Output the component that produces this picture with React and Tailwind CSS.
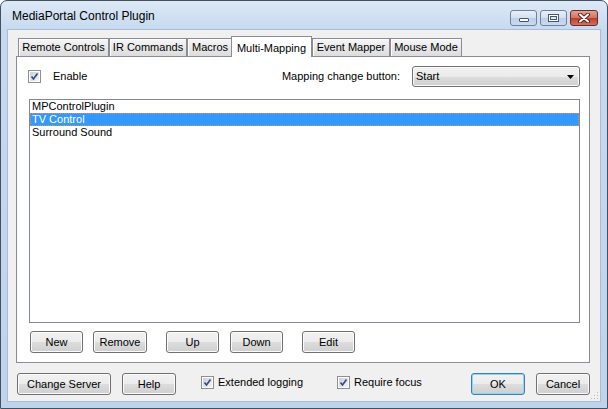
import React from "react";

const font = "font-['Liberation_Sans',Arial,sans-serif]";

function Btn({ children, className = "", def }) {
  return (
    <div
      className={`h-[22px] flex items-center justify-center rounded-[3px] border text-[11px] text-black ${
        def
          ? "border-[#3c7fb1] shadow-[inset_0_0_0_1px_#8ed6f8]"
          : "border-[#707070] shadow-[inset_0_0_0_1px_#fbfbfb]"
      } bg-[linear-gradient(to_bottom,#f2f2f2_0%,#ebebeb_50%,#dddddd_50%,#cfcfcf_100%)] ${className}`}
    >
      {children}
    </div>
  );
}

function Check() {
  return (
    <div className="w-[13px] h-[13px] border border-[#8e8f8f] bg-white p-[1px] shrink-0">
      <div className="w-full h-full bg-[linear-gradient(135deg,#cbcfd5,#f4f4f4)] flex items-center justify-center">
        <svg width="9" height="9" viewBox="0 0 9 9">
          <path d="M1.5 4.5 L3.5 7 L7.5 1.5" fill="none" stroke="#2b4a8a" strokeWidth="1.6" />
        </svg>
      </div>
    </div>
  );
}

function Tab({ label, w, selected }) {
  if (selected) {
    return (
      <div
        className={`relative z-10 -ml-[2px] h-[21px] -mb-px border border-b-0 border-[#898c95] bg-white flex items-start justify-center pt-[3px] ${w}`}
      >
        {label}
      </div>
    );
  }
  return (
    <div
      className={`h-[18px] border border-b-0 border-[#898c95] bg-[linear-gradient(to_bottom,#f6f6f6,#e9e9e9_50%,#dcdcdc)] shadow-[inset_1px_1px_0_#fcfcfc] flex items-center justify-center ${w}`}
    >
      {label}
    </div>
  );
}

export default function App() {
  return (
    <div className={`w-[608px] h-[409px] bg-white ${font} text-[11px] text-black`}>
      <div className="w-[608px] h-[409px] rounded-t-[7px] border border-[#45505f] bg-[linear-gradient(to_bottom,#dce8f5,#c6d9ef_30px,#bfd3ec)] flex flex-col px-[7px] pb-[7px]">
        {/* title bar */}
        <div className="h-[29px] flex items-start justify-between">
          <div className="pl-[4px] pt-[8px] text-[12px] leading-[14px]">MediaPortal Control Plugin</div>
          <div className="flex gap-[3px] pt-[9px] mr-[2px]">
            <div className="w-[27px] h-[16px] rounded-[3px] border border-[#6f819b] bg-[linear-gradient(to_bottom,#e7eff8,#d3e0f0_50%,#bccfe8_50%,#c9dbf0)] flex items-end justify-center pb-[3px]">
              <div className="w-[10px] h-[4px] rounded-[1px] border border-[#46566d] bg-white" />
            </div>
            <div className="w-[27px] h-[16px] rounded-[3px] border border-[#6f819b] bg-[linear-gradient(to_bottom,#e7eff8,#d3e0f0_50%,#bccfe8_50%,#c9dbf0)] flex items-center justify-center">
              <div className="w-[11px] h-[8px] border border-[#46566d] bg-white p-[1px]">
                <div className="w-full h-full border border-[#46566d] bg-[#dfe8f3]" />
              </div>
            </div>
            <div className="w-[28px] h-[16px] rounded-[3px] border border-[#6e2a26] bg-[linear-gradient(to_bottom,#e3a397,#d0715f_50%,#c0392b_50%,#d2705f)] flex items-center justify-center">
              <svg width="12" height="10" viewBox="0 0 12 10">
                <path d="M2 1.5 L10 8.5 M10 1.5 L2 8.5" stroke="#5a2420" strokeWidth="4" strokeLinecap="round" />
                <path d="M2 1.5 L10 8.5 M10 1.5 L2 8.5" stroke="#ffffff" strokeWidth="2" strokeLinecap="round" />
              </svg>
            </div>
          </div>
        </div>

        {/* client area */}
        <div className="relative flex-1 bg-[#f0f0f0] shadow-[0_0_0_1px_#a9bdd6] flex flex-col">
          <div className="ml-[8px] mr-[10px] pt-[6px]">
            <div className="h-[20px] flex items-end pl-[2px]">
              <Tab label="Remote Controls" w="w-[91px]" />
              <Tab label="IR Commands" w="w-[78px]" />
              <Tab label="Macros" w="w-[46px]" />
              <Tab label="Multi-Mapping" w="w-[81px]" selected />
              <Tab label="Event Mapper" w="w-[78px]" />
              <Tab label="Mouse Mode" w="w-[72px]" />
            </div>
            <div className="h-[307px] border border-[#898c95] bg-white flex flex-col pl-[12px] pr-[9px] pt-[9px]">
              <div className="h-[21px] flex items-center justify-between">
                <div className="flex items-center -ml-[1px]">
                  <Check />
                  <span className="ml-[12px]">Enable</span>
                </div>
                <div className="flex items-center">
                  <span className="mr-[12px]">Mapping change button:</span>
                  <div className="w-[168px] h-[21px] rounded-[3px] border border-[#707070] shadow-[inset_0_0_0_1px_#fbfbfb] bg-[linear-gradient(to_bottom,#f2f2f2_0%,#ebebeb_50%,#dddddd_50%,#cfcfcf_100%)] flex items-center justify-between pl-[3px] pr-[5px]">
                    <span>Start</span>
                    <svg width="7" height="4" viewBox="0 0 7 4">
                      <path d="M0 0 L7 0 L3.5 4 Z" fill="#000" />
                    </svg>
                  </div>
                </div>
              </div>
              <div className="mt-[12px] h-[224px] border border-[#828790] bg-white flex flex-col">
                <div className="h-[13px] leading-[13px] pl-[2px]">MPControlPlugin</div>
                <div className="h-[13px] leading-[11px] pl-[1px] bg-[#3399ff] text-white border border-dotted border-[#d9924a]">TV Control</div>
                <div className="h-[13px] leading-[13px] pl-[2px]">Surround Sound</div>
              </div>
              <div className="mt-[8px] flex">
                <Btn className="w-[53px] ml-[1px]">New</Btn>
                <Btn className="w-[54px] ml-[10px]">Remove</Btn>
                <Btn className="w-[53px] ml-[19px]">Up</Btn>
                <Btn className="w-[53px] ml-[11px]">Down</Btn>
                <Btn className="w-[53px] ml-[19px]">Edit</Btn>
              </div>
            </div>
          </div>

          <div className="mt-[10px] flex items-center pl-[9px] pr-[10px]">
            <Btn className="w-[94px]">Change Server</Btn>
            <Btn className="w-[54px] ml-[11px]">Help</Btn>
            <div className="ml-[25px] w-[136px] flex items-center -mt-[3px]">
              <Check />
              <span className="ml-[4px]">Extended logging</span>
            </div>
            <div className="flex items-center -mt-[3px]">
              <Check />
              <span className="ml-[4px]">Require focus</span>
            </div>
            <Btn def className="w-[54px] ml-auto">OK</Btn>
            <Btn className="w-[54px] ml-[11px]">Cancel</Btn>
          </div>

          {/* resize grip */}
          <svg className="absolute right-[1px] bottom-[1px]" width="9" height="9" viewBox="0 0 9 9">
            {[
              [7, 1], [7, 4], [4, 4], [7, 7], [4, 7], [1, 7],
            ].map(([x, y], i) => (
              <rect key={i} x={x} y={y} width="1" height="1" fill="#b8b8b8" />
            ))}
          </svg>
        </div>
      </div>
    </div>
  );
}
